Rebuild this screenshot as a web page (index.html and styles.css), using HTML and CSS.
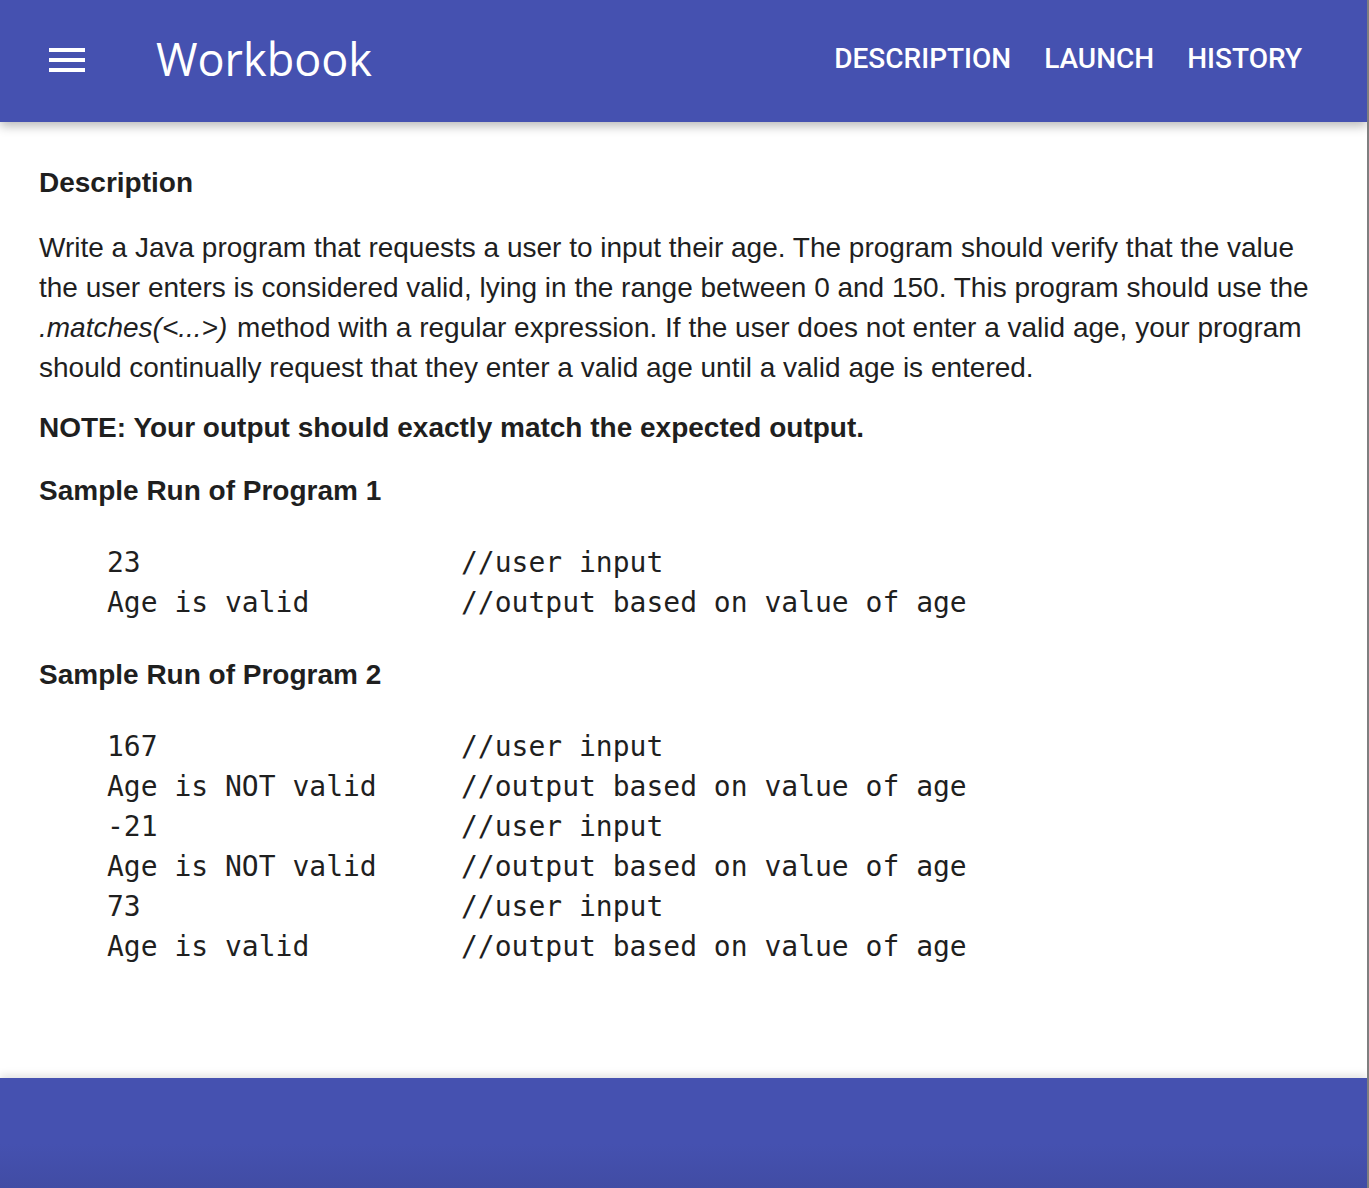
FILE: index.html
```html
<!DOCTYPE html>
<html>
<head>
<meta charset="utf-8">
<link rel="stylesheet" href="styles.css">
</head>
<body>
<div class="page">
  <header class="appbar">
    <div class="menu" aria-label="menu">
      <span class="bar"></span><span class="bar"></span><span class="bar"></span>
    </div>
    <div class="title">Workbook</div>
    <nav class="nav">
      <a class="nav-item">DESCRIPTION</a>
      <a class="nav-item">LAUNCH</a>
      <a class="nav-item">HISTORY</a>
    </nav>
  </header>
  <main class="content">
    <h2 class="heading first">Description</h2>
    <p class="para">Write a Java program that requests a user to input their age. The program should verify that the value the user enters is considered valid, lying in the range between 0 and 150. This program should use the <em class="method">.matches(&lt;...&gt;)</em> method with a regular expression. If the user does not enter a valid age, your program should continually request that they enter a valid age until a valid age is entered.</p>
    <p class="note">NOTE: Your output should exactly match the expected output.</p>
    <h3 class="heading sample">Sample Run of Program 1</h3>
<pre class="code">23                   //user input
Age is valid         //output based on value of age</pre>
    <h3 class="heading sample">Sample Run of Program 2</h3>
<pre class="code">167                  //user input
Age is NOT valid     //output based on value of age
-21                  //user input
Age is NOT valid     //output based on value of age
73                   //user input
Age is valid         //output based on value of age</pre>
  </main>
  <footer class="footer"></footer>
</div>
</body>
</html>
```
FILE: styles.css
```css
html, body {
  margin: 0;
  padding: 0;
  background: #ffffff;
}
body {
  font-family: "Liberation Sans", Arial, sans-serif;
  color: #1f1f1f;
}
.page {
  width: 1367px;
  height: 1188px;
  border-right: 2px solid #7f7f7f;
  display: flex;
  flex-direction: column;
  overflow: hidden;
}
.appbar {
  height: 122px;
  flex: 0 0 122px;
  background: #4551b0;
  display: flex;
  align-items: center;
  padding: 0 65px 0 49px;
  box-shadow: 0 4px 10px rgba(0,0,0,0.28);
  position: relative;
  z-index: 2;
  color: #ffffff;
}
.menu {
  display: flex;
  flex-direction: column;
  gap: 6px;
  width: 36px;
  margin-top: -2px;
}
.bar {
  display: block;
  height: 4px;
  background: #ffffff;
}
.title {
  font-family: "Open Sans", sans-serif;
  font-size: 45px;
  margin-left: 71px;
  margin-top: -5px;
  flex: 1;
}
.nav {
  display: flex;
  gap: 33px;
  margin-top: -6px;
}
.nav-item {
  font-family: Roboto, sans-serif;
  font-weight: 500;
  font-size: 28px;
  color: #ffffff;
}
.content {
  flex: 1;
  padding: 41px 39px 0 39px;
}
.heading {
  font-size: 28px;
  font-weight: bold;
  margin: 0;
  line-height: 40px;
}
.first {
  margin-bottom: 25px;
}
.para {
  font-size: 28px;
  line-height: 40px;
  margin: 0 0 20px 0;
}
.method {
  padding-right: 2px;
}
.note {
  font-size: 28px;
  font-weight: bold;
  line-height: 40px;
  margin: 0 0 23px 0;
}
.sample {
  margin-bottom: 32px;
}
.code {
  font-family: "DejaVu Sans Mono", monospace;
  font-size: 28px;
  line-height: 40px;
  margin: 0 0 32px 68px;
  color: #1f1f1f;
}
.footer {
  flex: 0 0 110px;
  background: linear-gradient(to bottom, #4551b0 0%, #4551b0 60%, #414ca4 100%);
  box-shadow: 0 -3px 8px rgba(0,0,0,0.12);
}
```
